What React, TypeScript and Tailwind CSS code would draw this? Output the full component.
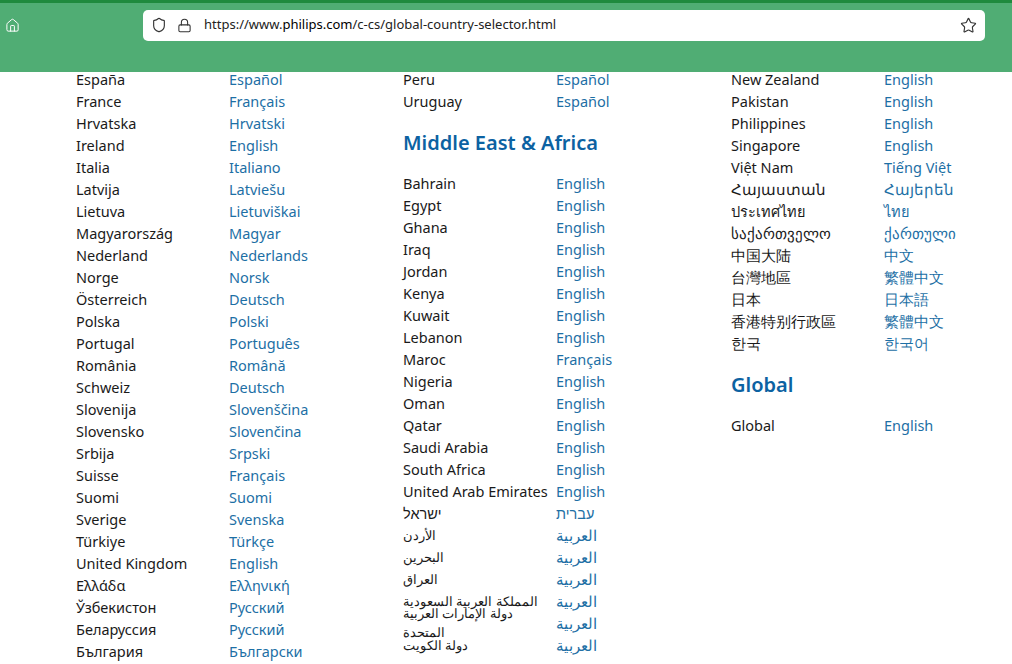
import React from 'react';
import { House, Shield, Lock, Star } from 'lucide-react';

type Row = [string, string];

const col1: Row[] = [
  ['España', 'Español'], ['France', 'Français'], ['Hrvatska', 'Hrvatski'], ['Ireland', 'English'],
  ['Italia', 'Italiano'], ['Latvija', 'Latviešu'], ['Lietuva', 'Lietuviškai'], ['Magyarország', 'Magyar'],
  ['Nederland', 'Nederlands'], ['Norge', 'Norsk'], ['Österreich', 'Deutsch'], ['Polska', 'Polski'],
  ['Portugal', 'Português'], ['România', 'Română'], ['Schweiz', 'Deutsch'], ['Slovenija', 'Slovenščina'],
  ['Slovensko', 'Slovenčina'], ['Srbija', 'Srpski'], ['Suisse', 'Français'], ['Suomi', 'Suomi'],
  ['Sverige', 'Svenska'], ['Türkiye', 'Türkçe'], ['United Kingdom', 'English'], ['Ελλάδα', 'Ελληνική'],
  ['Ўзбекистон', 'Русский'], ['Беларуссия', 'Русский'], ['България', 'Български'],
];

const mea: Row[] = [
  ['Bahrain', 'English'], ['Egypt', 'English'], ['Ghana', 'English'], ['Iraq', 'English'],
  ['Jordan', 'English'], ['Kenya', 'English'], ['Kuwait', 'English'], ['Lebanon', 'English'],
  ['Maroc', 'Français'], ['Nigeria', 'English'], ['Oman', 'English'], ['Qatar', 'English'],
  ['Saudi Arabia', 'English'], ['South Africa', 'English'], ['United Arab Emirates', 'English'],
  ['ישראל', 'עברית'], ['الأردن', 'العربية'], ['البحرين', 'العربية'], ['العراق', 'العربية'],
  ['المملكة العربية السعودية', 'العربية'], ['دولة الإمارات العربية المتحدة', 'العربية'], ['دولة الكويت', 'العربية'],
];

const col3: Row[] = [
  ['New Zealand', 'English'], ['Pakistan', 'English'], ['Philippines', 'English'], ['Singapore', 'English'],
  ['Việt Nam', 'Tiếng Việt'], ['Հայաստան', 'Հայերեն'], ['ประเทศไทย', 'ไทย'], ['საქართველო', 'ქართული'],
  ['中国大陆', '中文'], ['台灣地區', '繁體中文'], ['日本', '日本語'], ['香港特别行政區', '繁體中文'], ['한국', '한국어'],
];

const isArabic = (s: string) => /[\u0600-\u06FF]/.test(s);

function Rows({ rows }: { rows: Row[] }) {
  return (
    <div>
      {rows.map(([name, lang], i) => (
        <div key={i} className="flex h-[22px] items-center">
          <span className={`w-[153px] shrink-0 text-[#1a1a1a] ${isArabic(name) ? 'text-[12.5px]' : ''}`}>
            <span dir="auto">{name}</span>
          </span>
          <span className="text-[#1d6fa5]"><span dir="auto">{lang}</span></span>
        </div>
      ))}
    </div>
  );
}

function Heading({ children }: { children: React.ReactNode }) {
  return <h2 className="h-[59px] pt-[17px] text-[20px] leading-[26px] font-semibold text-[#0c62a2]">{children}</h2>;
}

export default function App() {
  return (
    <div className="h-[664px] w-[1012px] overflow-hidden bg-white font-['Open_Sans','Noto_Sans','Noto_Sans_CJK_SC',sans-serif] text-[14.5px]">
      {/* Browser chrome */}
      <div className="h-[72px] border-t-[3px] border-[#1f8a3e] bg-[#50ad74]">
        <div className="flex h-[44px] items-center">
          <div className="flex w-[143px] items-start pl-[5px] text-white"><House size={15} strokeWidth={1.6} /></div>
          <div className="flex h-[31px] w-[842px] items-center rounded-[5px] bg-white pl-[8px] pr-[8px] text-[13px] font-['Liberation_Sans',sans-serif] text-[#222]">
            <Shield size={16} strokeWidth={1.7} className="mr-[10px] text-[#333]" />
            <Lock size={15} strokeWidth={1.7} className="mr-[12px] text-[#333]" />
            <span className="flex-1">https://www.<span className="text-black">philips.com</span>/c-cs/global-country-selector.html</span>
            <Star size={17} strokeWidth={1.6} className="text-[#333]" />
          </div>
        </div>
      </div>

      <div className="-mt-[3px] flex">
        <div className="ml-[76px] w-[327px]">
          <Rows rows={col1} />
        </div>
        <div className="w-[328px]">
          <Rows rows={[['Peru', 'Español'], ['Uruguay', 'Español']]} />
          <Heading>Middle East &amp; Africa</Heading>
          <div className="mt-[1px]"><Rows rows={mea} /></div>
        </div>
        <div className="flex-1">
          <Rows rows={col3} />
          <Heading>Global</Heading>
          <div className="mt-[1px]"><Rows rows={[['Global', 'English']]} /></div>
        </div>
      </div>
    </div>
  );
}
